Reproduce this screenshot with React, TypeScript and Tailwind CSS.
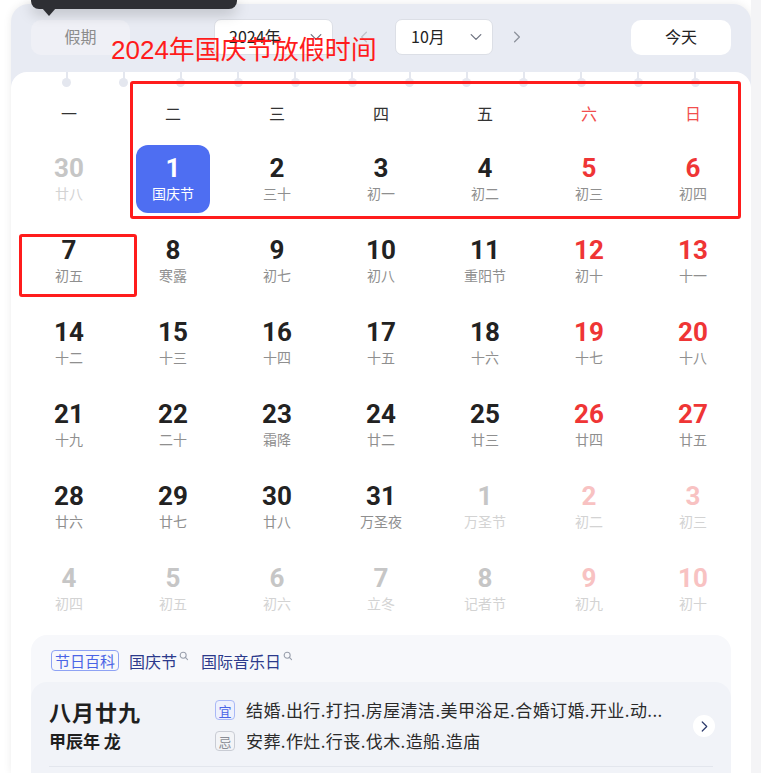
import React from "react";

type Cell = { d: number; l: string; kind: "cur" | "other"; red?: boolean; sel?: boolean };

const rows: Cell[][] = [
  [
    { d: 30, l: "廿八", kind: "other" },
    { d: 1, l: "国庆节", kind: "cur", sel: true },
    { d: 2, l: "三十", kind: "cur" },
    { d: 3, l: "初一", kind: "cur" },
    { d: 4, l: "初二", kind: "cur" },
    { d: 5, l: "初三", kind: "cur", red: true },
    { d: 6, l: "初四", kind: "cur", red: true },
  ],
  [
    { d: 7, l: "初五", kind: "cur" },
    { d: 8, l: "寒露", kind: "cur" },
    { d: 9, l: "初七", kind: "cur" },
    { d: 10, l: "初八", kind: "cur" },
    { d: 11, l: "重阳节", kind: "cur" },
    { d: 12, l: "初十", kind: "cur", red: true },
    { d: 13, l: "十一", kind: "cur", red: true },
  ],
  [
    { d: 14, l: "十二", kind: "cur" },
    { d: 15, l: "十三", kind: "cur" },
    { d: 16, l: "十四", kind: "cur" },
    { d: 17, l: "十五", kind: "cur" },
    { d: 18, l: "十六", kind: "cur" },
    { d: 19, l: "十七", kind: "cur", red: true },
    { d: 20, l: "十八", kind: "cur", red: true },
  ],
  [
    { d: 21, l: "十九", kind: "cur" },
    { d: 22, l: "二十", kind: "cur" },
    { d: 23, l: "霜降", kind: "cur" },
    { d: 24, l: "廿二", kind: "cur" },
    { d: 25, l: "廿三", kind: "cur" },
    { d: 26, l: "廿四", kind: "cur", red: true },
    { d: 27, l: "廿五", kind: "cur", red: true },
  ],
  [
    { d: 28, l: "廿六", kind: "cur" },
    { d: 29, l: "廿七", kind: "cur" },
    { d: 30, l: "廿八", kind: "cur" },
    { d: 31, l: "万圣夜", kind: "cur" },
    { d: 1, l: "万圣节", kind: "other" },
    { d: 2, l: "初二", kind: "other", red: true },
    { d: 3, l: "初三", kind: "other", red: true },
  ],
  [
    { d: 4, l: "初四", kind: "other" },
    { d: 5, l: "初五", kind: "other" },
    { d: 6, l: "初六", kind: "other" },
    { d: 7, l: "立冬", kind: "other" },
    { d: 8, l: "记者节", kind: "other" },
    { d: 9, l: "初九", kind: "other", red: true },
    { d: 10, l: "初十", kind: "other", red: true },
  ],
];

const weekdays = ["一", "二", "三", "四", "五", "六", "日"];

function Chevron({ dir, className }: { dir: "down" | "left" | "right"; className?: string }) {
  const d =
    dir === "down" ? "M4 7l6 6 6-6" : dir === "left" ? "M13 4l-6 6 6 6" : "M7 4l6 6-6 6";
  return (
    <svg viewBox="0 0 20 20" className={className} fill="none" stroke="currentColor" strokeWidth="1.6" strokeLinecap="round" strokeLinejoin="round">
      <path d={d} />
    </svg>
  );
}

function Search() {
  return (
    <svg viewBox="0 0 12 12" className="w-[10px] h-[10px] text-[#9aa0ad] -mt-[10px] ml-[2px]" fill="none" stroke="currentColor" strokeWidth="1.3">
      <circle cx="5" cy="5" r="3.6" />
      <path d="M7.7 7.7l2.6 2.6" strokeLinecap="round" />
    </svg>
  );
}

function DayCell({ c }: { c: Cell }) {
  let numColor = "text-[#222222]";
  let lunColor = "text-[#8f8f8f]";
  if (c.kind === "cur" && c.red) {
    numColor = "text-[#ef3535]";
  }
  if (c.kind === "other") {
    numColor = c.red ? "text-[#f8c2c2]" : "text-[#c6c6c6]";
    lunColor = "text-[#d3d3d3]";
  }
  if (c.sel) {
    numColor = "text-white";
    lunColor = "text-white";
  }
  return (
    <div className="h-[82px] flex items-center justify-center">
      <div
        className={
          "w-[74px] h-[68px] rounded-[12px] flex flex-col items-center pt-[9px] " +
          (c.sel ? "bg-[#4e6ef2]" : "")
        }
      >
        <div className={"text-[26px] leading-[28px] font-bold font-['Roboto',sans-serif] " + numColor}>{c.d}</div>
        <div className={"text-[14px] leading-[18px] mt-[2px] " + lunColor}>{c.l}</div>
      </div>
    </div>
  );
}

export default function App() {
  return (
    <div className="relative w-[761px] h-[773px] overflow-hidden bg-white flex font-['Noto_Sans_CJK_SC','Noto_Sans',sans-serif]">
      <div className="w-[751px] h-full pt-[4px] pl-[11px]">
        <div className="w-[740px] h-[769px] rounded-t-[18px] bg-[#e8ebf3] shadow-[0_0_8px_rgba(0,0,0,0.08)] flex flex-col">
          {/* header */}
          <div className="h-[68px] flex items-start pt-[15px] px-[20px]">
            <div className="w-[99px] h-[35px] mt-[1px] pb-[4px] rounded-[10px] bg-[#eff0f6] flex items-center justify-center text-[16px] text-[#8c8c8c]">
              假期
            </div>
            <div className="ml-[84px] w-[119px] h-[36px] rounded-[7px] bg-white border border-[#dcdfe6] flex items-center pl-[14px] pr-[8px] text-[16px] text-[#222]">
              <span className="flex-1 pb-[3px]">2024年</span>
              <Chevron dir="down" className="w-[16px] h-[16px] text-[#6e7380]" />
            </div>
            <div className="w-[62px] h-[36px] flex items-center justify-center">
              <Chevron dir="left" className="w-[16px] h-[16px] text-[#c0c3cb]" />
            </div>
            <div className="w-[98px] h-[36px] rounded-[7px] bg-white border border-[#dcdfe6] flex items-center pl-[15px] pr-[8px] text-[16px] text-[#222]">
              <span className="flex-1 pb-[3px]">10月</span>
              <Chevron dir="down" className="w-[16px] h-[16px] text-[#6e7380]" />
            </div>
            <div className="w-[48px] h-[36px] flex items-center justify-center">
              <Chevron dir="right" className="w-[16px] h-[16px] text-[#8d929c]" />
            </div>
            <div className="flex-1" />
            <div className="w-[100px] h-[35px] mt-[1px] pb-[4px] rounded-[10px] bg-white flex items-center justify-center text-[16px] text-[#222]">
              今天
            </div>
          </div>

          {/* body */}
          <div className="flex-1 bg-white rounded-t-[16px] flex flex-col">
            <div className="h-[16px] flex justify-between px-[51px]">
              {Array.from({ length: 12 }).map((_, i) => (
                <div key={i} className="w-[9px] flex flex-col items-center">
                  <div className="w-[2px] h-[7px] bg-[#e4e7ef]" />
                  <div className="w-[9px] h-[9px] rounded-full bg-[#e4e7ef] -mt-[1px]" />
                </div>
              ))}
            </div>
            <div className="px-[6px]">
              <div className="grid grid-cols-7 h-[50px] items-center">
                {weekdays.map((w, i) => (
                  <div key={w} className={"text-center text-[16px] " + (i >= 5 ? "text-[#f24e4e]" : "text-[#333]")}>
                    {w}
                  </div>
                ))}
              </div>
              {rows.map((r, ri) => (
                <div key={ri} className="grid grid-cols-7">
                  {r.map((c, ci) => (
                    <DayCell key={ci} c={c} />
                  ))}
                </div>
              ))}
            </div>

            {/* bottom panel */}
            <div className="mx-[20px] mt-[5px] flex-1 rounded-t-[16px] bg-[#f7f8fb] flex flex-col">
              <div className="h-[47px] flex items-center pl-[20px] pt-[4px]">
                <div className="h-[21px] px-[3px] rounded-[4px] border border-[#8ea2f4] text-[15px] leading-[18px] text-[#4a64e6] flex items-center">
                  节日百科
                </div>
                <div className="ml-[10px] flex items-center text-[16px] text-[#2c3a8c]">
                  国庆节
                  <Search />
                </div>
                <div className="ml-[12px] flex items-center text-[16px] text-[#2c3a8c]">
                  国际音乐日
                  <Search />
                </div>
              </div>
              <div className="flex-1 rounded-t-[16px] bg-[#f1f3f8] px-[18px] pt-[16px] flex flex-col">
                <div className="flex items-start">
                  <div className="w-[166px] flex flex-col">
                    <div className="text-[22px] leading-[26px] font-bold text-[#1f1f1f] tracking-[1px]">八月廿九</div>
                    <div className="text-[17px] leading-[22px] font-bold text-[#1f1f1f] mt-[6px]">甲辰年 龙</div>
                  </div>
                  <div className="flex-1 flex flex-col gap-[9px] pt-[1px]">
                    <div className="flex items-center">
                      <div className="w-[20px] h-[20px] rounded-[4px] border border-[#a9b8f6] bg-[#eef1fd] text-[13px] leading-none text-[#4a64e6] flex items-center justify-center">
                        宜
                      </div>
                      <div className="ml-[11px] text-[17px] leading-[22px] tracking-[0.4px] text-[#2a2a2a] whitespace-nowrap">
                        结婚.出行.打扫.房屋清洁.美甲浴足.合婚订婚.开业.动...
                      </div>
                    </div>
                    <div className="flex items-center">
                      <div className="w-[20px] h-[20px] rounded-[4px] border border-[#c9ccd4] bg-[#f3f4f7] text-[13px] leading-none text-[#8a8d95] flex items-center justify-center">
                        忌
                      </div>
                      <div className="ml-[11px] text-[17px] leading-[22px] tracking-[0.4px] text-[#2a2a2a] whitespace-nowrap">
                        安葬.作灶.行丧.伐木.造船.造庙
                      </div>
                    </div>
                  </div>
                  <div className="flex-1" />
                  <div className="w-[22px] h-[22px] mt-[17px] -mr-[2px] rounded-full bg-white flex items-center justify-center">
                    <Chevron dir="right" className="w-[15px] h-[15px] text-[#2c3a6c]" />
                  </div>
                </div>
                <div className="mt-[14px] h-px bg-[#e3e6ed]" />
              </div>
            </div>
          </div>
        </div>
      </div>
      <div className="w-[10px] h-full bg-[#f4f4f6]" />

      {/* tooltip overlay */}
      <div className="absolute left-[31px] top-0 w-[206px] h-[9px] rounded-b-[8px] bg-[#2e2f34] shadow-[0_4px_14px_rgba(0,0,0,0.25)]" />
      <svg className="absolute left-[42px] top-[8px] w-[14px] h-[8px]" viewBox="0 0 14 8">
        <polygon points="0,0 14,0 7,8" fill="#2e2f34" />
      </svg>

      {/* annotation overlays */}
      <div className="absolute left-[111px] top-[33px] text-[26px] leading-[34px] text-[#ff1c1c] whitespace-nowrap font-['Liberation_Sans','Noto_Sans_CJK_SC',sans-serif]">
        2024年国庆节放假时间
      </div>
      <div className="absolute left-[130px] top-[81px] w-[611px] h-[138px] border-[3px] border-[#ff1c1c] rounded-[3px]" />
      <div className="absolute left-[19px] top-[234px] w-[118px] h-[63px] border-[3px] border-[#ff1c1c] rounded-[3px]" />
    </div>
  );
}
